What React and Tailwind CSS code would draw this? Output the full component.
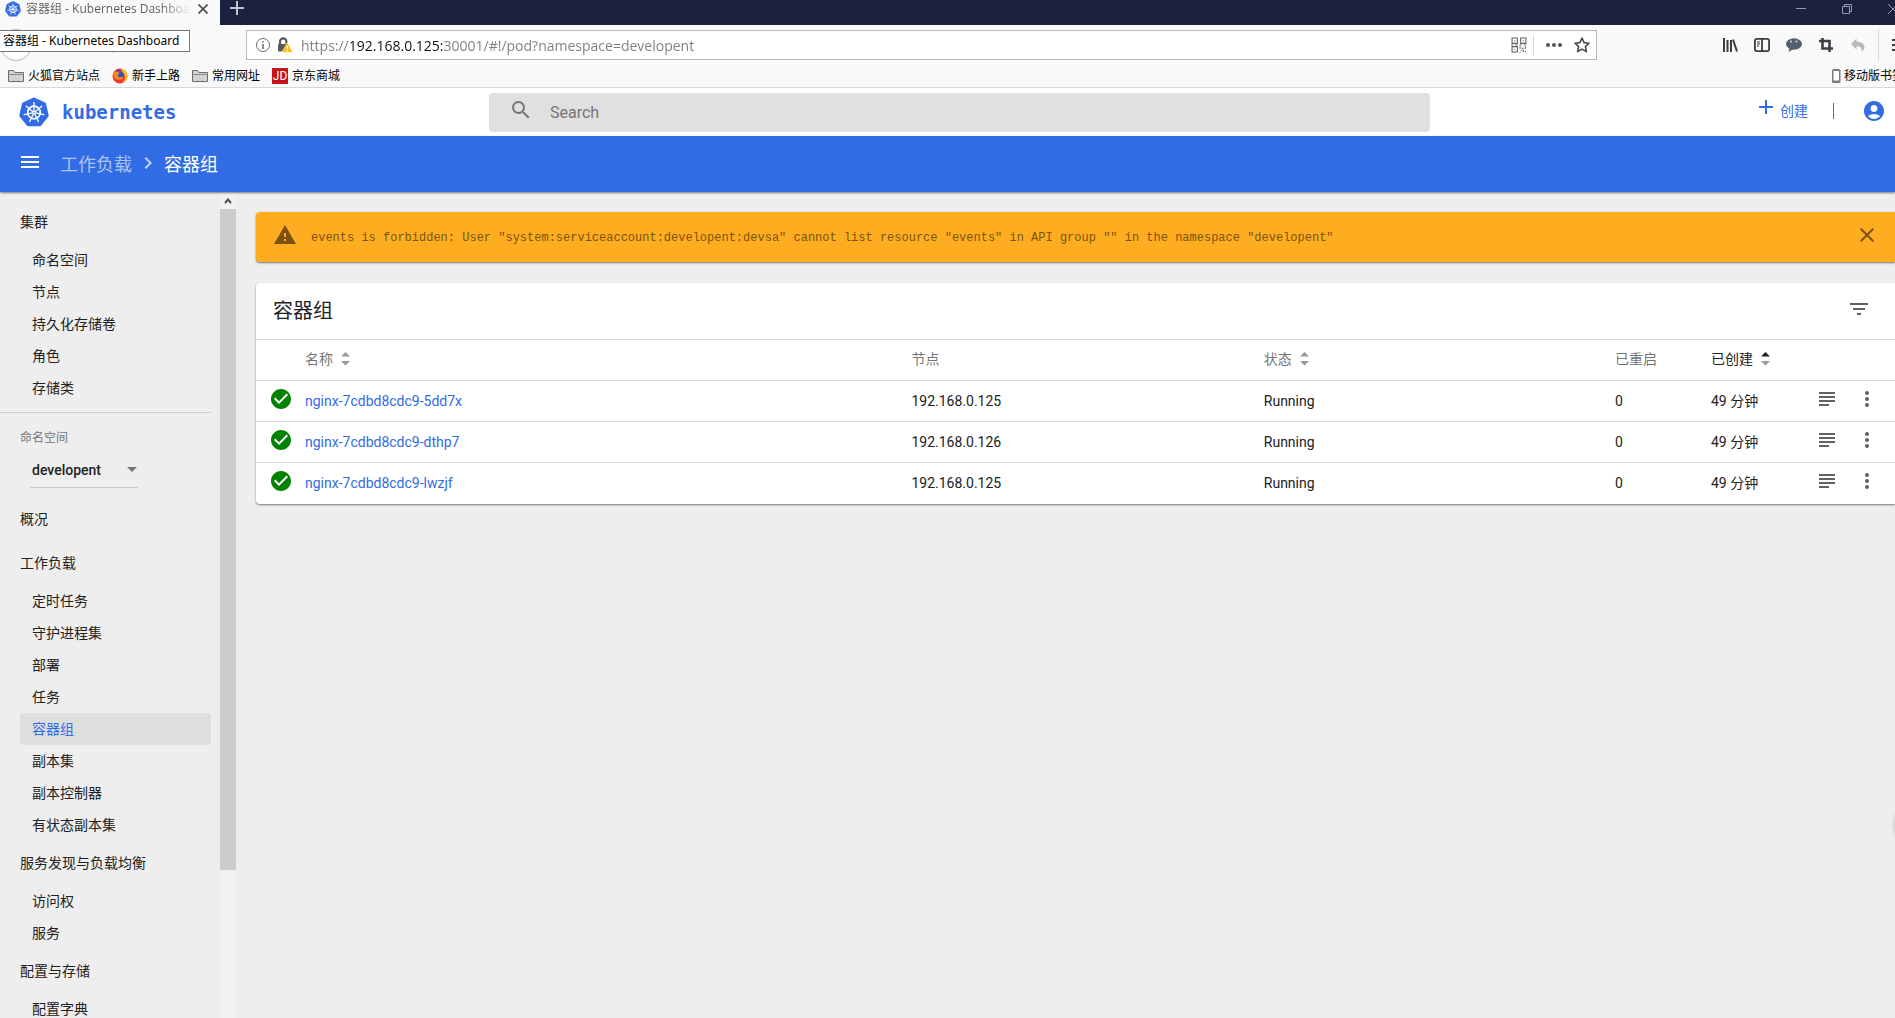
import { useState } from 'react';
import {
    MdAccountCircle,
    MdAdd,
    MdArrowDropDown,
    MdCheckCircle,
    MdChevronRight,
    MdClose,
    MdFilterList,
    MdMenu,
    MdMoreVert,
    MdSearch,
    MdSubject,
    MdWarning,
} from 'react-icons/md';

const clusterGroup = {
    title: '集群',
    items: ['命名空间', '节点', '持久化存储卷', '角色', '存储类'],
};

const navGroups = [
    { title: '概况', items: [] },
    {
        title: '工作负载',
        items: ['定时任务', '守护进程集', '部署', '任务', '容器组', '副本集', '副本控制器', '有状态副本集'],
    },
    { title: '服务发现与负载均衡', items: ['访问权', '服务'] },
    { title: '配置与存储', items: ['配置字典'] },
];

const pods = [
    { name: 'nginx-7cdbd8cdc9-5dd7x', node: '192.168.0.125', status: 'Running', restarts: 0, age: '49 分钟' },
    { name: 'nginx-7cdbd8cdc9-dthp7', node: '192.168.0.126', status: 'Running', restarts: 0, age: '49 分钟' },
    { name: 'nginx-7cdbd8cdc9-lwzjf', node: '192.168.0.125', status: 'Running', restarts: 0, age: '49 分钟' },
];

/* ── Logo ──────────────────────────────────────────────────────── */

const spokes = [0, 1, 2, 3, 4, 5, 6];

function KubernetesLogo({ className }) {
    return (
        <svg className={className} viewBox="0 0 30 30">
            <path
                d="M15 2.500 25.160 7.400 27.670 18.400 20.640 27.200H9.360L2.330 18.400 4.840 7.400z"
                fill="#326ce5"
                stroke="#326ce5"
                strokeWidth="4"
                strokeLinejoin="round"
            />
            <circle cx="15" cy="15.500" r="6.300" fill="none" stroke="#fff" strokeWidth="1.700" />
            <g stroke="#fff" strokeWidth="1.300" strokeLinecap="round">
                {spokes.map((n) => (
                    <path key={n} d="M15 13.800V5.500" transform={`rotate(${(n * 360) / 7} 15 15.500)`} />
                ))}
            </g>
            <circle cx="15" cy="15.500" r="1.800" fill="#fff" />
            <circle cx="15" cy="15.500" r=".7" fill="#326ce5" />
        </svg>
    );
}

/* ── Browser icons ─────────────────────────────────────────────── */

function FolderIcon() {
    return (
        <svg className="size-4 shrink-0" viewBox="0 0 16 16" fill="#d2d2d2" stroke="#6b6b6b">
            <path d="M.5 13.500v-11h5l1.500 2h8.500v9z" />
            <path d="M.5 6.500h15" stroke="#8c8c8c" />
        </svg>
    );
}

function FirefoxIcon() {
    return (
        <svg className="size-4 shrink-0" viewBox="0 0 16 16">
            <circle cx="8" cy="8" r="7.500" fill="#f03a2e" />
            <path d="M9 .6a7.500 7.500 0 0 1 6.500 7.400c0 3.500-2.500 6.500-6 7.300 2.500-2 4-4 3.500-7C12.500 5 10 4 9 .6z" fill="#ffc61a" />
            <circle cx="8" cy="7" r="3.600" fill="#2f55c4" />
            <path d="M7 1.200C5.500 1.500 4.200 2 3.500 3c1.500.2 3.500-.2 5 .6C8.500 2.500 7.800 1.800 7 1.200z" fill="#2f55c4" />
            <path d="M1.200 5c.4-1 .8-1.700 1.800-2.300 0 1 .8 1.500 2.500 1.500 1 0 2 .3 2 1C7.500 6 6 6 5.800 7c-.2 1.600 1.300 2.600 3 2.300 1-.2 1.700-.4 2.500-.3-.6 2-3 3.500-5.500 2.700C3 10.800 1 8 1.200 5z" fill="#ff8a16" />
        </svg>
    );
}

function InsecureLockIcon() {
    return (
        <svg className="size-4 shrink-0" viewBox="0 0 16 16">
            <path d="M3 8V4.500a3.200 3.200 0 0 1 6.400 0V7" fill="none" stroke="#5a5a5a" strokeWidth="2.200" />
            <rect x="1" y="7" width="9" height="7.500" rx="1" fill="#5a5a5a" />
            <path d="M10.300 5.500 15.800 15.200H4.900z" fill="#fbb917" stroke="#fff" strokeWidth=".5" />
            <path d="M10.400 9v3M10.400 12.900v1.200" stroke="#fff" strokeWidth="1.300" />
        </svg>
    );
}

function QrIcon() {
    return (
        <svg className="size-4" viewBox="0 0 15 15" fill="none" stroke="#5f5f68">
            <path d="M1 1h5v5H1zM9 1h5v5H9zM1 9h5v5H1z" />
            <path d="M3 3.500h1M11 3.500h1M3 11.500h1M0 7.500h2M4 7.500h2M8 7.500h2M12 7.500h2M8.500 9v2M10 10.500h2M13.500 9v2M9 12.500h1M11.500 12v2M13 13.500h1M8 14.500h1" />
        </svg>
    );
}

function InfoIcon() {
    return (
        <svg className="size-4 shrink-0" viewBox="0 0 16 16" fill="none" stroke="#6a6a6a">
            <circle cx="8" cy="8" r="6.500" />
            <path d="M8 7v5M8 4v1.500" strokeWidth="1.500" />
        </svg>
    );
}

function StarIcon() {
    return (
        <svg className="size-4" viewBox="0 0 16 16" fill="none" stroke="#4a4a4a" strokeWidth="1.600" strokeLinejoin="round">
            <path d="m8 1 2.100 4.600 4.900.6-3.600 3.400 1 5L8 12.100 3.600 14.600l1-5L1 6.200l4.900-.6z" />
        </svg>
    );
}

function LibraryIcon() {
    return (
        <svg className="size-4" viewBox="0 0 16 16" stroke="#3d3d3d" strokeWidth="2">
            <path d="M2 1v14M5.500 3v12M9 3v12" />
            <path d="m11 2.500 4 12" />
        </svg>
    );
}

function SidebarIcon() {
    return (
        <svg className="size-4" viewBox="0 0 16 16" fill="none" stroke="#3d3d3d" strokeWidth="1.800">
            <rect x=".9" y="1.900" width="14.200" height="12.200" rx="2" />
            <path d="M8 2v12" />
            <path d="M3 5h3M3 7h3M3 9h2" strokeWidth="1" />
        </svg>
    );
}

function ChatIcon() {
    return (
        <svg className="size-4" viewBox="0 0 16 16">
            <ellipse cx="8" cy="7" rx="8" ry="5.800" fill="#52616f" />
            <path d="M3.500 11 2.500 15l5-3z" fill="#52616f" />
            <circle cx="5" cy="4.500" r="1" fill="#d5dde4" />
            <circle cx="10.500" cy="4.500" r="1" fill="#d5dde4" />
        </svg>
    );
}

function CropIcon() {
    return (
        <svg className="size-4" viewBox="0 0 16 16" fill="none" stroke="#3f3f48" strokeWidth="2.600">
            <path d="M4.500 1v10.500H15" />
            <path d="M1 4h10.500v11" />
        </svg>
    );
}

function UndoIcon() {
    return (
        <svg className="size-4" viewBox="0 0 16 16" fill="#b9b9b9">
            <path d="M6.500 1.500v3.200c5 0 8 2.300 8 5.600 0 2-1.200 3.500-3 4.200.8-3-.8-5.200-5-5.200v3.200L1 7z" />
        </svg>
    );
}

function PhoneIcon() {
    return (
        <svg className="h-4 w-3 shrink-0" viewBox="0 0 12 16">
            <rect x="2" y="1" width="8.500" height="14" rx="1.500" fill="#7d7d7d" />
            <rect x="3.500" y="3" width="5.500" height="9.500" fill="#fff" />
        </svg>
    );
}

function SortIcon({ asc = false }) {
    return (
        <svg className="h-4 w-[9px]" viewBox="0 0 9 16">
            <path d="M4.500 1 9 5.500H0z" fill={asc ? '#212121' : '#9a9a9a'} />
            <path d="M4.500 14.500 9 10H0z" fill="#9a9a9a" />
        </svg>
    );
}

/* ── Browser chrome ────────────────────────────────────────────── */

const toolbarButtons = [
    { label: '书库', Icon: LibraryIcon },
    { label: '侧栏', Icon: SidebarIcon },
    { label: '消息', Icon: ChatIcon },
    { label: '截图', Icon: CropIcon },
    { label: '撤销', Icon: UndoIcon },
];

function TabBar() {
    return (
        <div className="flex h-[25px] bg-[#1d2140]">
            <div className="flex w-[220px] shrink-0 items-start bg-[#f9f9fa] pl-[5px]">
                <KubernetesLogo className="mt-[1px] size-4 shrink-0" />
                <span className="ml-[5px] w-[166px] overflow-hidden whitespace-nowrap bg-[linear-gradient(90deg,#5c5c5c_135px,transparent_166px)] bg-clip-text font-['Open_Sans','Noto_Sans_CJK_SC',sans-serif] text-xs leading-[18px] text-transparent">
                    容器组 - Kubernetes Dashboard
                </span>
                <button aria-label="关闭标签页" className="ml-[3px] mt-[1px] flex size-4 items-center justify-center">
                    <svg className="size-[10px]" viewBox="0 0 10 10" stroke="#4a4a4a" strokeWidth="1.600">
                        <path d="m.5.5 9 9M9.500.5l-9 9" />
                    </svg>
                </button>
            </div>
            <button aria-label="新建标签页" className="flex h-4 w-[34px] items-center justify-center">
                <svg className="size-[14px]" viewBox="0 0 14 14" stroke="#c3c4cf" strokeWidth="2">
                    <path d="M7 0v14M0 7h14" />
                </svg>
            </button>
            <div className="-mr-[21px] ml-auto flex h-[18px] shrink-0">
                <button aria-label="最小化" className="flex w-[46px] items-center justify-center">
                    <svg className="size-[10px]" viewBox="0 0 10 10" stroke="#9b9cab">
                        <path d="M0 4.500h10" />
                    </svg>
                </button>
                <button aria-label="还原" className="flex w-[46px] items-center justify-center">
                    <svg className="size-[10px]" viewBox="0 0 10 10" fill="none" stroke="#9b9cab">
                        <path d="M.5 2.500h7v7h-7zM2.500 2.500v-2h7v7h-2" />
                    </svg>
                </button>
                <button aria-label="关闭" className="flex w-[46px] items-center justify-center">
                    <svg className="size-[10px]" viewBox="0 0 10 10" stroke="#9b9cab">
                        <path d="m0 0 10 10M10 0 0 10" />
                    </svg>
                </button>
            </div>
        </div>
    );
}

function UrlBar() {
    const [url, setUrl] = useState('https://192.168.0.125:30001/#!/pod?namespace=developent');

    return (
        <div className="flex h-10 items-center">
            <div className="flex w-[246px] shrink-0 items-center">
                <button aria-label="后退" className="block size-8 rounded-full border border-[#b5b5b5] bg-white" />
                <button aria-label="刷新" className="ml-[73px]">
                    <svg className="size-4" viewBox="0 0 16 16" fill="none" stroke="#3d3d3d" strokeWidth="2">
                        <path d="M13.500 5A6.200 6.200 0 1 0 14 9.500" />
                        <path d="M14 1v5H9" />
                    </svg>
                </button>
            </div>
            <div className="flex h-[30px] flex-1 items-center border border-[#b9b9b9] bg-white pl-2 pr-[6px]">
                <InfoIcon />
                <span className="ml-[6px] flex">
                    <InsecureLockIcon />
                </span>
                <input
                    aria-label="网址"
                    value={url}
                    onChange={(e) => setUrl(e.target.value)}
                    className="ml-2 h-6 min-w-0 flex-1 bg-[linear-gradient(90deg,#7d7d7d_50px,#111_50px,#111_141px,#7d7d7d_141px)] bg-clip-text font-['Open_Sans',sans-serif] text-sm text-transparent outline-none"
                />
                <button aria-label="二维码">
                    <QrIcon />
                </button>
                <span className="ml-[6px] h-5 w-px bg-[#d9d9d9]" />
                <button aria-label="更多操作" className="ml-3">
                    <svg className="size-4" viewBox="0 0 16 16" fill="#555">
                        <circle cx="2" cy="8" r="2" />
                        <circle cx="8" cy="8" r="2" />
                        <circle cx="14" cy="8" r="2" />
                    </svg>
                </button>
                <button aria-label="收藏" className="ml-3">
                    <StarIcon />
                </button>
            </div>
            <div className="flex w-[298px] shrink-0 items-center justify-end overflow-hidden">
                <div className="flex gap-4 pr-3">
                    {toolbarButtons.map(({ label, Icon }) => (
                        <button key={label} aria-label={label}>
                            <Icon />
                        </button>
                    ))}
                </div>
                <span className="h-8 w-px bg-[#d9d9d9]" />
                <button aria-label="菜单" className="-mr-3 ml-3 shrink-0">
                    <svg className="size-4" viewBox="0 0 16 16" stroke="#3d3d3d" strokeWidth="2">
                        <path d="M1 3h14M1 8h14M1 13h14" />
                    </svg>
                </button>
            </div>
        </div>
    );
}

function BookmarkBar() {
    return (
        <div className="flex h-[22px] items-center gap-3 overflow-hidden whitespace-nowrap pl-2 text-xs text-black">
            <a href="#" className="flex items-center gap-1">
                <FolderIcon />
                火狐官方站点
            </a>
            <a href="#" className="flex items-center gap-1">
                <FirefoxIcon />
                新手上路
            </a>
            <a href="#" className="flex items-center gap-1">
                <FolderIcon />
                常用网址
            </a>
            <a href="#" className="flex items-center gap-1">
                <span className="flex size-4 items-center justify-center bg-[#c3151c] text-xs text-white">JD</span>
                京东商城
            </a>
            <a href="#" className="-mr-[9px] ml-auto flex shrink-0 items-center gap-[2px]">
                <PhoneIcon />
                移动版书签
            </a>
        </div>
    );
}

function BrowserChrome() {
    return (
        <div className="relative shrink-0 border-b border-[#d8d8d8] bg-[#f9f9fa]">
            <TabBar />
            <UrlBar />
            <BookmarkBar />
            {/* Hovered tab title */}
            <div
                role="tooltip"
                className="absolute left-0 top-[30px] h-[22px] w-[190px] whitespace-nowrap border border-l-0 border-[#767676] bg-white pl-[3px] font-['Noto_Sans','Noto_Sans_CJK_SC',sans-serif] text-xs leading-5 text-black"
            >
                容器组 - Kubernetes Dashboard
            </div>
        </div>
    );
}

/* ── Dashboard ─────────────────────────────────────────────────── */

function Header() {
    return (
        <header className="flex h-12 shrink-0 items-center bg-white">
            <a href="#" className="flex w-[489px] shrink-0 items-center gap-[13px] pl-[19px] text-[#326ce5]">
                <KubernetesLogo className="size-[30px]" />
                <span className="font-['DejaVu_Sans_Mono',monospace] text-[19px] font-bold">kubernetes</span>
            </a>
            <label className="flex h-[39px] flex-1 items-center rounded-sm bg-[#e0e0e0] pl-5 text-[#757575]">
                <MdSearch className="mb-1 size-6" />
                <input
                    type="text"
                    aria-label="Search"
                    placeholder="Search"
                    className="ml-[17px] flex-1 bg-transparent pt-[2px] text-base outline-none placeholder:text-[#757575]"
                />
            </label>
            <div className="flex w-[465px] shrink-0 items-center justify-end pb-[2px] pr-[9px] text-[#326ce5]">
                <button className="flex items-center gap-[2px] text-sm">
                    <MdAdd className="mb-2 size-6" />
                    创建
                </button>
                <span className="ml-[25px] h-4 w-px bg-[#326ce5]" />
                <button aria-label="账户" className="ml-7">
                    <MdAccountCircle className="size-6" />
                </button>
            </div>
        </header>
    );
}

function ActionBar() {
    return (
        <div className="z-10 flex h-14 shrink-0 items-center bg-[#326ce5] pl-[18px] text-lg text-white shadow-[0_1px_2px_rgba(0,0,0,0.5)]">
            <button aria-label="切换导航" className="mb-1">
                <MdMenu className="size-6" />
            </button>
            <nav aria-label="面包屑" className="ml-[18px] flex items-center pt-[2px]">
                <a href="#" className="text-white/60">
                    工作负载
                </a>
                <MdChevronRight className="mx-1 mb-1 size-6 text-white/70" />
                <span>容器组</span>
            </nav>
        </div>
    );
}

function NavGroup({ group, active }) {
    return (
        <div>
            <a href="#" className="flex h-11 items-center pl-5">
                {group.title}
            </a>
            {group.items.map((item) => (
                <a
                    key={item}
                    href="#"
                    className={`ml-5 mr-[9px] flex h-8 items-center rounded-sm pl-3 ${item === active ? 'bg-[#dedede] text-[#326ce5]' : ''}`}
                >
                    {item}
                </a>
            ))}
        </div>
    );
}

function Sidebar() {
    const [namespace, setNamespace] = useState('developent');

    return (
        <aside className="flex w-[236px] shrink-0">
            <div className="w-[220px] overflow-hidden pt-2 text-sm">
                <NavGroup group={clusterGroup} />
                <div className="mr-[9px] mt-2 border-t border-[#cfcfcf]" />
                <div className="mb-[9px] mt-[15px]">
                    <label htmlFor="namespace" className="block pl-5 text-xs leading-5 text-[#757575]">
                        命名空间
                    </label>
                    <div className="relative ml-[30px] mt-[5px] w-[108px] border-b border-[#cacaca]">
                        <select
                            id="namespace"
                            value={namespace}
                            onChange={(e) => setNamespace(e.target.value)}
                            className="block h-[34px] w-full appearance-none bg-transparent pl-[2px] font-medium outline-none"
                        >
                            <option>developent</option>
                            <option>default</option>
                        </select>
                        <MdArrowDropDown className="pointer-events-none absolute -right-[6px] top-1 size-6 text-[#757575]" />
                    </div>
                </div>
                {navGroups.map((group) => (
                    <NavGroup key={group.title} group={group} active="容器组" />
                ))}
            </div>
            {/* Scrollbar track */}
            <div className="flex w-4 flex-col bg-[#f2f2f2]">
                <div className="flex h-[17px] items-center justify-center">
                    <svg className="size-2" viewBox="0 0 8 8" fill="none" stroke="#505050" strokeWidth="2">
                        <path d="m1 6 3-3.500L7 6" />
                    </svg>
                </div>
                <div className="h-[80%] bg-[#cdcdcd]" />
            </div>
        </aside>
    );
}

function Alert({ onClose }) {
    return (
        <div
            role="alert"
            className="flex h-[50px] items-center rounded-l-sm bg-[#ffad20] pl-[17px] pr-4 text-[#7a5310] shadow-[0_1px_2px_rgba(0,0,0,0.5)]"
        >
            <MdWarning className="mb-1 size-6 shrink-0" />
            <p className="ml-[14px] flex-1 pt-[2px] font-['Liberation_Mono',monospace] text-xs">
                events is forbidden: User "system:serviceaccount:developent:devsa" cannot list resource "events" in API group "" in the namespace "developent"
            </p>
            <button aria-label="关闭" className="mb-1" onClick={onClose}>
                <MdClose className="size-6" />
            </button>
        </div>
    );
}

function PodTable() {
    return (
        <section className="rounded-l-sm bg-white shadow-[0_1px_2px_rgba(0,0,0,0.5)]">
            <div className="flex h-14 items-center justify-between pl-[17px] pr-6">
                <h2 className="text-xl">容器组</h2>
                <button aria-label="筛选" className="mb-1 text-[#616161]">
                    <MdFilterList className="size-6" />
                </button>
            </div>
            <table className="w-full table-fixed text-left text-sm">
                <colgroup>
                    <col className="w-[49px]" />
                    <col className="w-[37%]" />
                    <col className="w-[21.5%]" />
                    <col />
                    <col className="w-24" />
                    <col className="w-24" />
                    <col className="w-10" />
                    <col className="w-12" />
                </colgroup>
                <thead>
                    <tr className="h-[41px] border-t border-[#d8d8d8] text-[#757575]">
                        <th />
                        <th className="pb-[2px] font-normal">
                            <button className="flex items-center gap-2">
                                名称 <SortIcon />
                            </button>
                        </th>
                        <th className="pb-[2px] font-normal">节点</th>
                        <th className="pb-[2px] font-normal">
                            <button className="flex items-center gap-2">
                                状态 <SortIcon />
                            </button>
                        </th>
                        <th className="pb-[2px] font-normal">已重启</th>
                        <th className="pb-[2px] font-normal text-[#212121]">
                            <button className="flex items-center gap-2">
                                已创建 <SortIcon asc />
                            </button>
                        </th>
                        <th />
                        <th />
                    </tr>
                </thead>
                <tbody>
                    {pods.map((pod) => (
                        <tr key={pod.name} className="h-[41px] border-t border-[#d8d8d8]">
                            <td className="pb-1 pl-[13px]">
                                <MdCheckCircle className="size-6 text-[#038103]" />
                            </td>
                            <td>
                                <a href="#" className="text-[#326ce5]">
                                    {pod.name}
                                </a>
                            </td>
                            <td>{pod.node}</td>
                            <td>{pod.status}</td>
                            <td>{pod.restarts}</td>
                            <td>{pod.age}</td>
                            <td className="pb-1">
                                <button aria-label="日志" className="mx-auto block text-[#616161]">
                                    <MdSubject className="size-6" />
                                </button>
                            </td>
                            <td className="pb-1 pr-2">
                                <button aria-label="操作" className="mx-auto block text-[#616161]">
                                    <MdMoreVert className="size-6" />
                                </button>
                            </td>
                        </tr>
                    ))}
                </tbody>
            </table>
        </section>
    );
}

export default function App() {
    const [showAlert, setShowAlert] = useState(true);

    return (
        <div className="relative flex h-screen flex-col overflow-hidden bg-[#eeeeee] font-['Roboto','Noto_Sans_CJK_SC',sans-serif] text-[#212121]">
            <BrowserChrome />
            <Header />
            <ActionBar />
            <div className="flex min-h-0 flex-1">
                <Sidebar />
                <main className="flex min-w-0 flex-1 flex-col gap-[21px] pl-5 pt-5">
                    {showAlert && <Alert onClose={() => setShowAlert(false)} />}
                    <PodTable />
                </main>
            </div>
            {/* Floating widget docked past the right edge */}
            <div className="absolute -right-10 bottom-[172px] size-10 rounded-full shadow-[0_0_5px_rgba(0,0,0,0.3)]" />
        </div>
    );
}
